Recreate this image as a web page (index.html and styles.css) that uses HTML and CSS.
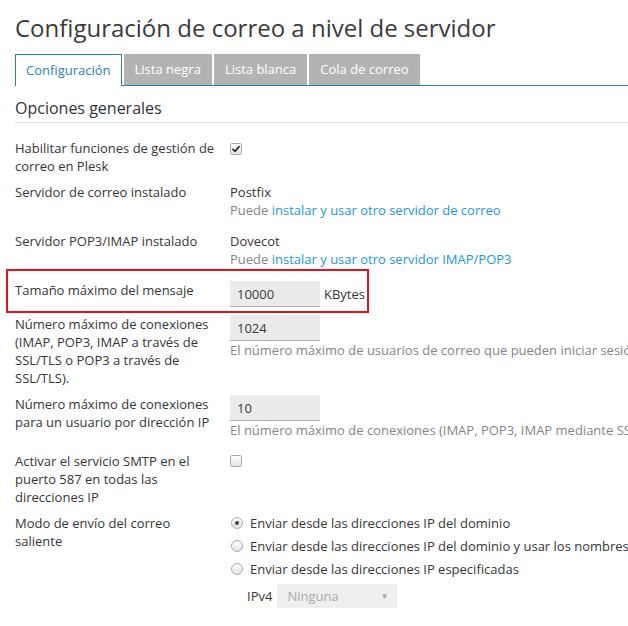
FILE: index.html
```html
<!DOCTYPE html>
<html lang="es">
<head>
<meta charset="utf-8">
<title>Configuración de correo a nivel de servidor</title>
<link rel="stylesheet" href="styles.css">
</head>
<body>
<div class="page">
  <h1 class="title">Configuración de correo a nivel de servidor</h1>
  <ul class="tabs">
    <li class="tab active">Configuración</li>
    <li class="tab">Lista negra</li>
    <li class="tab">Lista blanca</li>
    <li class="tab">Cola de correo</li>
  </ul>
  <h2 class="section">Opciones generales</h2>
  <div class="form">
    <div class="row">
      <div class="label">Habilitar funciones de gestión de correo en Plesk</div>
      <div class="value">
        <span class="checkbox checked"><svg viewBox="0 0 12 12" width="12" height="12"><path d="M3 6.3 L5 8.3 L9 3.6" fill="none" stroke="#2e2e2e" stroke-width="1.8" stroke-linecap="round" stroke-linejoin="round"/></svg></span>
      </div>
    </div>
    <div class="row">
      <div class="label">Servidor de correo instalado</div>
      <div class="value">
        <div>Postfix</div>
        <div class="hint spaced">Puede <a class="link" href="#">instalar y usar otro servidor de correo</a></div>
      </div>
    </div>
    <div class="row">
      <div class="label">Servidor POP3/IMAP instalado</div>
      <div class="value">
        <div>Dovecot</div>
        <div class="hint spaced">Puede <a class="link" href="#">instalar y usar otro servidor IMAP/POP3</a></div>
      </div>
    </div>
    <div class="row highlight">
      <div class="label with-input">Tamaño máximo del mensaje</div>
      <div class="value">
        <div class="inline">
          <input class="field" type="text" value="10000">
          <span class="unit">KBytes</span>
        </div>
      </div>
    </div>
    <div class="row">
      <div class="label with-input">Número máximo de conexiones (IMAP, POP3, IMAP a través de SSL/TLS o POP3 a través de SSL/TLS).</div>
      <div class="value">
        <input class="field" type="text" value="1024">
        <div class="hint nowrap">El número máximo de usuarios de correo que pueden iniciar sesión simultáneamente en el servidor.</div>
      </div>
    </div>
    <div class="row">
      <div class="label with-input">Número máximo de conexiones para un usuario por dirección IP</div>
      <div class="value">
        <input class="field" type="text" value="10">
        <div class="hint nowrap spaced">El número máximo de conexiones (IMAP, POP3, IMAP mediante SSL/TLS o POP3 mediante SSL/TLS) desde una dirección IP.</div>
      </div>
    </div>
    <div class="row">
      <div class="label">Activar el servicio SMTP en el puerto 587 en todas las direcciones IP</div>
      <div class="value">
        <span class="checkbox low"></span>
      </div>
    </div>
    <div class="row">
      <div class="label narrow">Modo de envío del correo saliente</div>
      <div class="value">
        <div class="radios">
          <label class="option"><span class="radio on"></span>Enviar desde las direcciones IP del dominio</label>
          <label class="option"><span class="radio"></span>Enviar desde las direcciones IP del dominio y usar los nombres de dominio en los encabezados SMTP</label>
          <label class="option"><span class="radio"></span>Enviar desde las direcciones IP especificadas</label>
          <div class="ipline">
            <span class="iplabel">IPv4</span>
            <div class="select"><span>Ninguna</span><span class="arrow">▼</span></div>
          </div>
        </div>
      </div>
    </div>
  </div>
</div>
</body>
</html>
```

FILE: styles.css
```css
html, body {
  margin: 0;
  padding: 0;
  background: #ffffff;
  overflow: hidden;
}

body {
  font-family: "Open Sans", "Liberation Sans", sans-serif;
  font-size: 13px;
  line-height: 18px;
  color: #363636;
}

.page {
  padding: 13px 0 0 15px;
}

.title {
  margin: 0 0 11px 0;
  font-size: 24px;
  line-height: 30px;
  font-weight: 400;
  color: #3a3a3a;
  white-space: nowrap;
}

.tabs {
  list-style: none;
  margin: 0;
  padding: 0;
  display: flex;
  gap: 2px;
  border-bottom: 1px solid #2a7db5;
  height: 31px;
}

.tab {
  height: 31px;
  line-height: 30px;
  padding: 0 11px;
  background: #b3b3b3;
  color: #ffffff;
  font-size: 13px;
  box-sizing: border-box;
  white-space: nowrap;
}

.tab.active {
  background: #ffffff;
  color: #2f80b6;
  border: 1px solid #2a7db5;
  border-bottom: none;
  padding: 0 10px;
  height: 32px;
  margin-bottom: -1px;
}

.section {
  margin: 11px 0 0 0;
  padding-bottom: 3px;
  font-size: 16px;
  line-height: 22px;
  font-weight: 400;
  color: #333333;
  border-bottom: 1px solid #dedede;
}

.form {
  margin-top: 16px;
  display: flex;
  flex-direction: column;
  gap: 8px;
}

.row {
  display: grid;
  grid-template-columns: 205px 1fr;
  column-gap: 10px;
  align-items: start;
}

.row.highlight {
  position: relative;
}

.row.highlight::after {
  content: "";
  position: absolute;
  left: -9px;
  top: -12px;
  width: 363px;
  height: 44px;
  border: 2px solid #e3121b;
  box-sizing: border-box;
  pointer-events: none;
}

.label.with-input {
  padding-top: 0;
}

.label.narrow {
  max-width: 160px;
}

.value {
  min-width: 0;
}

.hint {
  color: #858585;
}

.hint.spaced {
  margin-bottom: 5px;
}

.nowrap {
  white-space: nowrap;
}

.link {
  color: #1c98de;
  text-decoration: none;
}

.inline {
  display: flex;
  align-items: center;
}

.field {
  display: block;
  width: 90px;
  height: 26px;
  box-sizing: border-box;
  margin: 0;
  padding: 0 7px;
  border: none;
  border-bottom: 1px solid #a9b3bc;
  background: #ebebeb;
  font-family: "Open Sans", "Liberation Sans", sans-serif;
  font-size: 13px;
  color: #3a3a3a;
  outline: none;
}

.unit {
  margin-left: 4px;
}

.checkbox {
  display: block;
  width: 12px;
  height: 12px;
  box-sizing: border-box;
  margin-top: 4px;
  border: 1px solid #a9a9a9;
  border-radius: 2px;
  background: linear-gradient(#ffffff, #e3e3e3);
  position: relative;
}

.checkbox svg {
  position: absolute;
  left: -1px;
  top: -1px;
}

.checkbox.low {
  margin-top: 3px;
}

.radios {
  display: flex;
  flex-direction: column;
  gap: 5px;
}

.option {
  display: flex;
  align-items: center;
  white-space: nowrap;
}

.radio {
  width: 12px;
  height: 12px;
  box-sizing: border-box;
  border: 1px solid #ababab;
  border-radius: 50%;
  background: linear-gradient(#ffffff, #e2e2e2);
  margin-right: 7px;
  margin-left: 1px;
  position: relative;
  flex: none;
}

.radio.on::after {
  content: "";
  position: absolute;
  left: 3px;
  top: 3px;
  width: 4px;
  height: 4px;
  border-radius: 50%;
  background: #444444;
}

.ipline {
  display: flex;
  align-items: center;
  margin-top: 1px;
  padding-left: 17px;
}

.iplabel {
  margin-right: 5px;
}

.select {
  display: flex;
  align-items: center;
  justify-content: space-between;
  width: 120px;
  height: 24px;
  box-sizing: border-box;
  padding: 0 9px 0 10px;
  background: #eeeeee;
  color: #ababab;
}

.arrow {
  font-size: 8px;
  color: #a5a5a5;
}
```
